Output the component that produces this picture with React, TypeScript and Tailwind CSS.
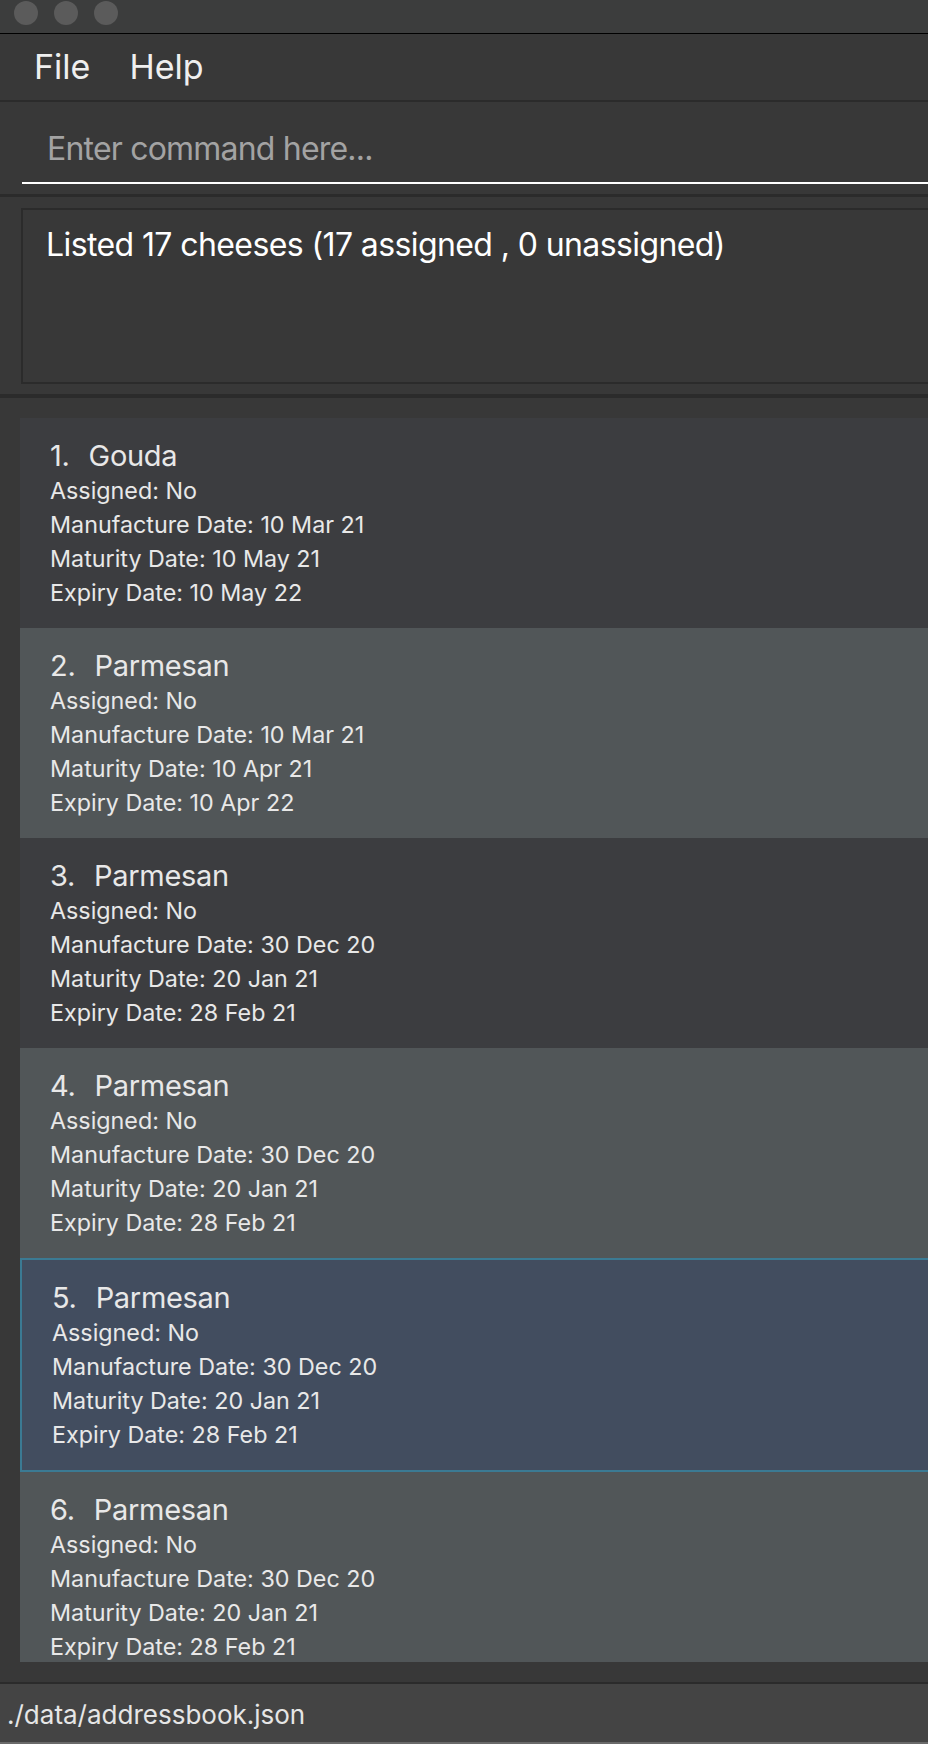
import React from "react";

type Cheese = {
  name: string;
  assigned: string;
  manufacture: string;
  maturity: string;
  expiry: string;
};

const cheeses: Cheese[] = [
  { name: "Gouda", assigned: "No", manufacture: "10 Mar 21", maturity: "10 May 21", expiry: "10 May 22" },
  { name: "Parmesan", assigned: "No", manufacture: "10 Mar 21", maturity: "10 Apr 21", expiry: "10 Apr 22" },
  { name: "Parmesan", assigned: "No", manufacture: "30 Dec 20", maturity: "20 Jan 21", expiry: "28 Feb 21" },
  { name: "Parmesan", assigned: "No", manufacture: "30 Dec 20", maturity: "20 Jan 21", expiry: "28 Feb 21" },
  { name: "Parmesan", assigned: "No", manufacture: "30 Dec 20", maturity: "20 Jan 21", expiry: "28 Feb 21" },
  { name: "Parmesan", assigned: "No", manufacture: "30 Dec 20", maturity: "20 Jan 21", expiry: "28 Feb 21" },
];

const SELECTED = 4;

function CheeseCard({ cheese, index }: { cheese: Cheese; index: number }) {
  const selected = index === SELECTED;
  const bg = selected
    ? "bg-[#424d5f] border-2 border-r-0 border-[#3b7a93] h-[214px] pl-[30px]"
    : index % 2 === 0
    ? "bg-[#3c3d40] h-[210px] pl-[30px]"
    : "bg-[#515658] h-[210px] pl-[30px]";

  return (
    <div className={`shrink-0 pt-[20px] text-[#e8e8e8] ${bg}`}>
      <div className="flex gap-[19px] text-[29px] leading-[36px] tracking-[-0.3px]">
        <span>{index + 1}.</span>
        <span>{cheese.name}</span>
      </div>
      <div className="text-[23.3px] leading-[34px]">
        <div>Assigned: {cheese.assigned}</div>
        <div>Manufacture Date: {cheese.manufacture}</div>
        <div>Maturity Date: {cheese.maturity}</div>
        <div>Expiry Date: {cheese.expiry}</div>
      </div>
    </div>
  );
}

export default function App() {
  return (
    <div
      className="w-[928px] h-[1744px] flex flex-col bg-[#383838] overflow-hidden"
      style={{ fontFamily: "Inter, 'Liberation Sans', sans-serif" }}
    >
      {/* title bar */}
      <div className="h-[34px] shrink-0 bg-[#3c3d3d] border-b border-black flex items-start gap-[16px] pl-[14px] pt-[1px]">
        <span className="w-[24px] h-[24px] rounded-full bg-[#5b5b5b]" />
        <span className="w-[24px] h-[24px] rounded-full bg-[#5b5b5b]" />
        <span className="w-[24px] h-[24px] rounded-full bg-[#5b5b5b]" />
      </div>

      {/* menu */}
      <div className="h-[68px] shrink-0 border-b-2 border-[#2b2b2b] flex items-center pl-[34px] gap-[39px] text-[34px] text-[#efefef] pb-[2px]">
        <span>File</span>
        <span>Help</span>
      </div>

      {/* command box */}
      <div className="h-[92px] shrink-0 pt-[12px] pl-[22px]">
        <input
          type="text"
          placeholder="Enter command here..."
          className="w-full h-[70px] bg-transparent border-b-2 border-white pl-[25px] text-[32px] tracking-[-0.8px] text-white outline-none placeholder:text-[#a3a3a3]"
        />
      </div>
      <div className="h-[3px] shrink-0 bg-[#2b2b2b]" />

      {/* result display */}
      <div className="h-[197px] shrink-0 pt-[11px] pl-[21px]">
        <div className="h-[176px] border-2 border-r-0 border-[#2b2b2b] pl-[23px] pt-[15px] text-[32px] leading-[40px] text-white tracking-[-0.6px]">
          Listed 17 cheeses (17 assigned , 0 unassigned)
        </div>
      </div>
      <div className="h-[4px] shrink-0 bg-[#2b2b2b]" />

      {/* list */}
      <div className="flex-1 min-h-0 pt-[20px] pb-[20px] pl-[20px] flex flex-col">
        <div className="flex-1 min-h-0 overflow-hidden flex flex-col">
          {cheeses.map((c, i) => (
            <CheeseCard key={i} cheese={c} index={i} />
          ))}
        </div>
      </div>
      <div className="h-[2px] shrink-0 bg-[#2b2b2b]" />

      {/* status bar */}
      <div className="h-[58px] shrink-0 bg-[#444444] pl-[7px] pt-[3px] flex items-center text-[26px] text-[#e6e6e6]">
        ./data/addressbook.json
      </div>
      <div className="h-[2px] shrink-0 bg-[#6a6a6a]" />
    </div>
  );
}
